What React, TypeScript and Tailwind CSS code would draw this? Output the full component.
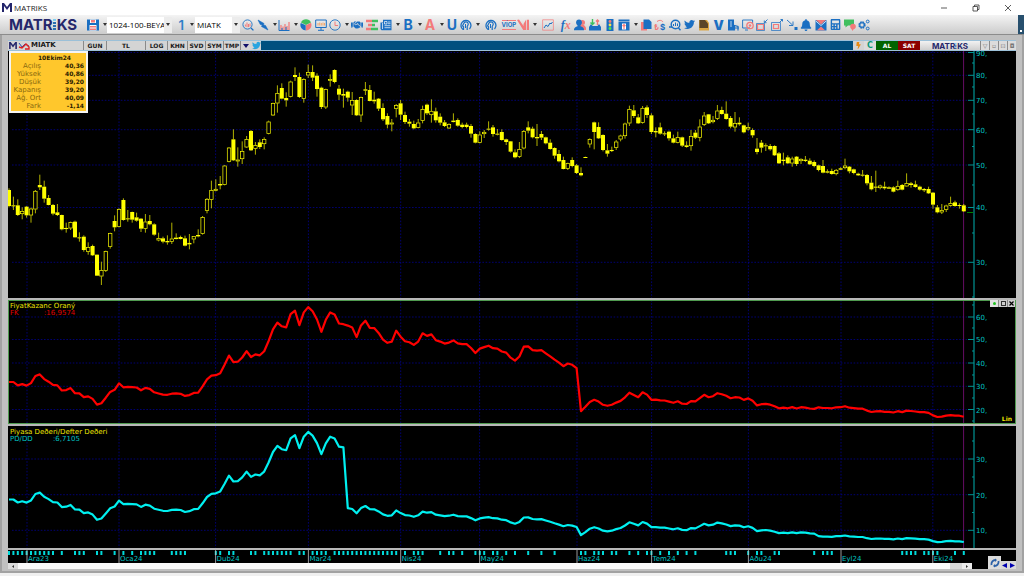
import { ReactNode } from "react";
import { FaBell, FaBolt, FaCalculator, FaHandshake, FaNewspaper, FaTwitter } from "react-icons/fa";

const BLUE = "#1b6fc2";
const RED = "#f37a7a";
const GREEN = "#3fbf5f";
const TEAL = "#009494";

const PLOT_X = 8;
const PLOT_W = 960;
const FIRST_X = 9;
const STEP = 4.4;

// one candle per item: high, body top, body bottom, low, filled (in thirds of a pixel)
const SEGMENTS: { base: number; rows: string }[] = [
  {
    base: 510,
    rows: `55,60,108,112,1 80,106,108,120,1 88,106,135,138,1 112,124,132,148,0 108,110,136,143,1 113,116,136,158,0 60,63,118,130,0
14,45,52,60,1 32,50,86,98,1 75,84,105,106,1 102,105,131,136,1 102,127,135,138,1 134,135,178,181,1 158,174,176,188,0
155,157,175,180,0 152,155,202,203,1 187,202,204,215,1 196,200,240,245,1 217,232,245,254,0 224,228,256,258,1 253,254,317,318,1
275,301,319,345,0 242,244,302,306,0 188,190,230,236,0 136,153,172,184,1 115,118,170,172,0 85,90,150,152,1 120,145,147,155,1
125,126,149,158,1 128,142,152,155,1 144,146,176,186,1 132,155,176,188,0 135,153,163,166,1 160,163,194,197,1 188,205,211,214,0
200,205,215,220,1 196,213,217,224,1 158,206,215,222,0 190,203,207,208,0 197,201,207,208,1 197,205,227,229,1 192,219,223,238,0
198,199,208,220,0 178,196,199,202,0 138,142,191,194,0 84,87,122,130,0 32,61,89,115,0 28,57,62,64,0 18,43,45,58,0`,
  },
  {
    base: 180,
    rows: `315,317,374,376,0 261,263,305,307,0 208,238,301,303,1 262,299,304,320,0 244,274,297,312,0 228,238,262,264,0 210,213,271,273,1
246,256,266,284,0 238,247,261,267,1 232,238,252,268,0 182,185,221,223,0 128,130,166,168,0 76,100,130,158,0 70,84,116,118,1
97,114,121,140,1 62,65,110,112,0 22,45,51,63,1 38,51,111,114,1 55,58,116,128,0 14,37,46,54,0 16,36,53,63,1 40,47,87,110,1
80,83,141,147,1 86,88,142,147,0 43,58,62,80,0 28,30,66,70,1 75,86,104,120,1 86,102,107,143,1 92,95,113,125,1 96,121,136,165,0
118,120,166,168,1 110,112,166,186,0 66,88,92,105,1 75,90,123,124,1 95,119,124,131,1 114,116,146,153,1 130,144,178,183,1
160,168,194,205,1 177,188,193,214,0 132,136,146,172,0 120,130,164,180,1 155,165,186,192,1 177,185,191,200,1 182,192,205,208,1
177,188,203,205,0 137,148,182,190,0 131,134,160,165,1 118,153,165,188,0 143,154,181,188,1 160,170,188,196,1 180,187,198,201,1
190,193,205,207,0`,
  },
  {
    base: 270,
    rows: `70,92,96,97,0 85,90,107,110,1 98,104,111,115,1 98,104,111,115,1 102,108,131,143,1 130,132,158,160,1 124,134,158,160,0
120,126,132,144,0 94,116,119,122,1 105,112,132,140,1 117,131,134,136,1 118,126,150,152,1 146,148,156,165,1 153,154,185,188,1
178,187,202,205,1 156,178,200,204,0 120,124,175,178,0 94,112,122,130,1 110,116,142,145,1 102,141,145,168,1 123,132,143,150,1
140,142,160,163,1 148,158,177,179,1 172,174,197,206,1 180,192,214,217,1 200,210,237,238,1 218,220,236,240,0 202,210,228,232,1
222,226,249,252,1 232,249,256,259,1 200,201,202,203,1 145,148,163,173,0 95,97,126,178,1 97,111,145,147,1 133,135,180,184,1
162,181,191,200,1 170,180,182,186,0 150,155,173,180,0 134,137,148,154,0 98,101,138,146,0 47,58,100,108,0 45,61,78,84,1
72,82,100,102,1 48,54,98,101,0 46,52,75,84,1 70,76,126,132,1 112,124,126,142,0 98,112,131,134,1 124,130,133,138,1
122,125,145,152,1 134,145,158,160,1 125,142,158,160,0 140,142,167,171,1 154,166,171,173,1 120,139,168,182,0 120,128,143,147,1
88,110,143,154,0 66,77,104,108,0 72,73,100,102,1 78,90,96,100,0 45,62,86,90,0 50,60,72,74,1 34,71,87,89,1 78,84,110,115,1
66,100,112,125,0 82,98,103,107,1 104,106,127,130,1 98,112,118,122,0 115,120,136,143,1 144,176,186,193,1 150,158,173,188,1
160,166,169,183,1 162,168,178,182,1 166,168,196,198,1 186,190,220,222,1 188,209,213,226,1 196,202,220,222,1 200,206,220,230,0
198,200,222,228,1 205,207,213,222,0 198,209,213,216,1 205,212,223,225,1 211,216,228,232,1 224,226,240,244,1 210,228,248,250,1
238,244,248,250,1 236,243,252,254,1 237,240,252,256,0 232,235,239,240,1 206,227,234,238,0 228,230,244,250,1 236,238,249,253,1
248,251,256,258,1 240,254,257,260,1 252,255,280,286,1 258,278,298,301,1 242,290,292,306,0 284,287,294,298,0 275,290,295,299,1
289,292,296,297,1 289,292,305,307,1 272,288,300,302,0 282,285,299,301,1 250,280,289,290,0 276,280,285,293,1 272,283,291,293,1
287,290,299,302,1 294,297,301,306,1 290,297,310,312,1 306,308,344,356,1 345,352,367,370,1 342,361,367,372,0 344,347,359,366,0
320,340,347,350,0 332,337,348,350,1 340,345,348,356,1 342,346,364,366,1`,
  },
];

type Candle = { x: number; high: number; top: number; bottom: number; low: number; filled: boolean };

const candles: Candle[] = SEGMENTS.flatMap(({ base, rows }) =>
  rows.split(/\s+/).map((r) => {
    const [h, t, b, l, f] = r.split(",").map(Number);
    return { x: 0, high: (h + base) / 3, top: (t + base) / 3, bottom: (b + base) / 3, low: (l + base) / 3, filled: f === 1 };
  })
).map((c, i) => ({ ...c, x: FIRST_X + i * STEP }));

// the price axis is logarithmic, 132.2px per doubling
const closes = candles.map((c) => 80 * Math.pow(2, (75.3 - (c.filled ? c.bottom : c.top)) / 132.2));

const peFactor = (i: number) => (i < 130 ? 0.79 : i < 184 ? 0.407 : 0.43);
const pbFactor = (i: number) => (i < 77 ? 0.463 : i < 130 ? 0.228 : i < 184 ? 0.183 : 0.172);

const pePoints = closes.map((c, i) => `${candles[i].x},${(409.5 - (c * peFactor(i) - 20) * 2.3175).toFixed(1)}`).join(" ");
const pbPoints = closes.map((c, i) => `${candles[i].x},${(494.7 - (c * pbFactor(i) - 20) * 3.565).toFixed(1)}`).join(" ");

const MONTHS: [number, string][] = [
  [27, "Ara23"], [119, "Oca24"], [215.6, "Dub24"], [308.4, "Mar24"], [400.7, "Nis24"], [479.6, "May24"],
  [577, "Haz24"], [651.6, "Tem24"], [748.4, "Aðu24"], [841, "Eyl24"], [932.8, "Eki24"],
];

const EVENTS = [
  0, 1, 2, 3, 4, 5, 6, 7, 8, 9, 10, 12, 15, 16, 17, 20, 21, 24, 26, 28, 30, 31, 32, 33, 37, 38, 39, 40, 47, 48, 50, 51, 55, 56,
  58, 59, 60, 61, 62, 63, 64, 66, 67, 69, 70, 71, 72, 74, 75, 76, 77, 78, 79, 80, 81, 82, 83, 84, 85, 86, 87, 88, 90, 92, 93, 94,
  98, 100, 101, 103, 106, 107, 108, 110, 111, 113, 115, 118, 121, 124, 130, 131, 133, 134, 135, 137, 138, 141, 143, 145, 146, 148,
  150, 152, 154, 156, 163, 164, 165, 168, 170, 171, 174, 175, 183, 185, 186, 187, 203, 204, 205, 206, 208, 209, 210, 211, 215, 217,
];

function Plot({ top, height, rows, children }: { top: number; height: number; rows: number[]; children: ReactNode }) {
  return (
    <svg className="block h-full min-w-0 flex-1" viewBox={`${PLOT_X} ${top} ${PLOT_W} ${height}`} preserveAspectRatio="none">
      <g stroke="#0000a0" strokeWidth="0.7" strokeDasharray="1.6 1.6">
        {rows.map((y) => <line key={y} x1="12" x2="968" y1={y} y2={y} />)}
        {MONTHS.map(([x]) => <line key={x} x1={x} x2={x} y1={top} y2={top + height} />)}
      </g>
      <line x1="963.6" x2="963.6" y1={top} y2={top + height} stroke="#80107f" strokeWidth="0.8" />
      {children}
    </svg>
  );
}

function Axis({ top, height, labels, minor }: { top: number; height: number; labels: [number, string][]; minor: number[] }) {
  const pct = (y: number) => `${(((y - top) / height) * 100).toFixed(2)}%`;
  return (
    <svg className="block h-full w-12 shrink-0" fontSize="7" fontFamily="'DejaVu Sans', sans-serif">
      <line x1="6" x2="6" y1="0" y2="100%" stroke={TEAL} strokeWidth="1.2" />
      {labels.map(([y, t]) => (
        <g key={t}>
          <line x1="0" x2="6" y1={pct(y)} y2={pct(y)} stroke={TEAL} />
          <text x="8" y={pct(y)} dy="3" fill="#00c4c4">{t}</text>
        </g>
      ))}
      {minor.map((y) => <line key={y} x1="4" x2="6" y1={pct(y)} y2={pct(y)} stroke={TEAL} />)}
    </svg>
  );
}

function Ico({ children }: { children: ReactNode }) {
  return <svg className="h-3 w-3 shrink-0" viewBox="0 0 12 12" fill="none">{children}</svg>;
}

function Caret() {
  return <svg className="h-[3px] w-1 shrink-0" viewBox="0 0 4 3"><path d="M0 0h4L2 3z" fill="#333" /></svg>;
}

const HeadIcon = (
  <Ico>
    <path d="M3 10.5A5 5 0 1 1 9.5 10" stroke={BLUE} strokeWidth="1.3" />
    <path d="M3.5 11V7.5L2.5 7l1.5-3c1-1.5 3-1.5 4 0 .8 1.5 0 2.5-.8 3.5V11" stroke={BLUE} strokeWidth="1.2" />
    <path d="M5.5 5v4" stroke={BLUE} />
  </Ico>
);

type Tool = { name: string; icon: ReactNode; menu?: boolean; gap?: boolean };

const TOOLS: Tool[] = [
  { name: "Detail search", icon: <Ico><circle cx="5.5" cy="5.5" r="4.6" stroke={BLUE} strokeWidth="0.9" /><path d="M9 9l2.4 2.4" stroke={BLUE} strokeWidth="1.3" /><path d="M3.4 7.5V5.5M5 8V3.5M6.5 8V5M8 7.5V4.5" stroke={RED} strokeWidth="1" /></Ico> },
  { name: "Signals", menu: true, icon: <Ico><path d="M1 1l6 3.5-.5 1.5 2 .5L11 11 4.5 7.5l.8-1.5-2-.5z" fill={BLUE} stroke={BLUE} strokeWidth="0.6" /></Ico> },
  { name: "Bars", menu: true, icon: <Ico><path d="M1 1v10.5h10.5" stroke={BLUE} /><path d="M3 11V6M5 11V7.5M7 11V5M9 11V7M11 11V3" stroke={RED} strokeWidth="1.2" /><path d="M4 11V9M8 11V8" stroke={BLUE} /></Ico> },
  { name: "Portfolio", icon: <Ico><path d="M6 6L1 3.5A5.5 5.5 0 0 1 11 3.5z" fill={GREEN} /><path d="M6 6.3l5-2.5a5.5 5.5 0 0 1-5 7.7z" fill={RED} /><path d="M5.7 6.3L.8 3.9a5.5 5.5 0 0 0 4.9 7.6z" fill={BLUE} /></Ico> },
  { name: "Screen", icon: <Ico><path d="M.7 1h10.6v7.5H.7zM6 8.5V11M3 11.3h6" stroke={BLUE} strokeWidth="1" /><path d="M3 6.5V4M4.7 6.5V3.5M6.3 6.5V4M8 6.5V3.5M9.5 6.5V4" stroke="#f5a25d" strokeWidth="0.9" /></Ico> },
  { name: "Time", menu: true, icon: <Ico><circle cx="6" cy="6" r="5.2" stroke={BLUE} strokeWidth="0.9" /><path d="M6 2.5V6.5h3" stroke={RED} /></Ico> },
  { name: "Agreement", icon: <FaHandshake size={12} color={BLUE} /> },
  { name: "Depth", icon: <Ico><path d="M0 2h6M2 6h4M0 10h5" stroke={RED} strokeWidth="2.4" /><path d="M6 2h6M6 6h3M5 10h7" stroke={GREEN} strokeWidth="2.4" /></Ico> },
  { name: "News", menu: true, icon: <Ico><path d="M3 .8h8.5v10.4H1.5L.5 10V3.5H3z" fill={BLUE} /><path d="M4.5 2.5h2.5v2.500H4.500zM8 3h2.5M8 4.700h2.500M4.500 6.700h6M4.500 8.700h6M2.500 4v6" stroke="#fff" strokeWidth="0.7" /></Ico> },
  { name: "Buy", menu: true, icon: <span className="text-[14px] leading-3 font-bold text-[#1b6fc2]">B</span> },
  { name: "Ask", menu: true, icon: <span className="text-[14px] leading-3 font-bold text-[#f37a7a]">A</span> },
  { name: "Underline", icon: <span className="text-[14px] leading-3 font-bold text-[#1b6fc2]">U</span> },
  { name: "Advisor", menu: true, gap: true, icon: HeadIcon },
  { name: "Analyst", gap: true, icon: HeadIcon },
  { name: "VIOP", icon: <span className="border-y border-[#f37a7a] text-[6px] leading-2 font-bold text-[#1b6fc2]">VİOP</span> },
  { name: "Matriks menu", menu: true, gap: true, icon: <Ico><path d="M0 1l2-.5L6.500 7v4.500zM6.500 5L9 .8V11H6.500zM9.8.8H12V11H9.800z" fill={RED} /></Ico> },
  { name: "Chart", gap: true, icon: <Ico><path d="M.6.8h10.8v10.4H.6z" stroke={RED} strokeWidth="0.7" /><path d="M2 9l2-3 2 1.5L8 4l1 1 1.5-2" stroke={BLUE} /></Ico> },
  { name: "Formula", icon: <span className="font-[Liberation_Serif,serif] text-[12px] leading-3 font-bold text-[#1b6fc2] italic">f<span className="text-[#f37a7a]">x</span></span> },
  { name: "Users", icon: <Ico><circle cx="8.5" cy="3.5" r="2.5" fill={RED} /><path d="M6 11V6h4l2 2.5V11z" fill={RED} /><circle cx="5" cy="3.5" r="2.9" fill={BLUE} /><path d="M0 11.3c0-3 2-4 5-4s5 1 5 4z" fill={BLUE} /><path d="M3.5 5h3v3h-3z" fill={BLUE} /></Ico> },
  { name: "Import", icon: <Ico><path d="M0 8l2-3 1.5 2h5L10 5l2 3v3.5H0z" fill={BLUE} /><path d="M3.5 0v5M1.5 3.5l2 2 2-2" stroke={GREEN} strokeWidth="1.4" /><path d="M8.5 6V1M7 2.5L8.5 1 10 2.5" stroke={RED} strokeWidth="1.4" /></Ico> },
  { name: "Alarm levels", icon: <Ico><path d="M2.5 0h7v12h-7z" fill={BLUE} /><circle cx="6" cy="2.5" r="1.4" fill={RED} /><circle cx="6" cy="6" r="1.4" fill="#f5e04a" /><circle cx="6" cy="9.5" r="1.4" fill="#4ee04e" /></Ico> },
  { name: "Upload", menu: true, icon: <Ico><path d="M.5 .5h11v2H.5zM.5 3h11v8.5H.5z" fill={BLUE} /><path d="M4 4.5h4v6H4z" fill="#fff" /><path d="M6 10V6M4.5 7L6 5.5 7.5 7" stroke={RED} strokeWidth="1.2" /></Ico> },
  { name: "Copy", icon: <Ico><path d="M1 3h6v8.5H1z" fill={RED} /><path d="M3.5 .5H9l2.5 2.5V10h-8z" fill={BLUE} /></Ico> },
  { name: "Currency", icon: <Ico><text x="0" y="11" fontSize="8" fontWeight="700" fill={RED} fontFamily="Inter, sans-serif">₺</text><text x="6" y="11" fontSize="8" fontWeight="700" fill={BLUE} fontFamily="Inter, sans-serif">$</text><path d="M3 2.5c3-2 5-1 6 .5" stroke={RED} /></Ico> },
  { name: "Find", icon: <Ico><circle cx="6.5" cy="5.5" r="4.3" stroke={BLUE} strokeWidth="1.4" /><path d="M9.5 9l2 2.3M0 8h3" stroke={BLUE} strokeWidth="1.4" /><path d="M4.5 7V5M6.5 7V3.5M8.5 7V4.5" stroke={BLUE} /></Ico> },
  { name: "Twitter", icon: <FaTwitter size={11} color={BLUE} /> },
  { name: "Notes", icon: <Ico><path d="M1 1h8l2 3v7.5H1z" fill="#d9a441" /><path d="M1.5 1H7l3 3.5V9H1.5z" fill="#5b4526" /></Ico> },
  { name: "V", icon: <span className="text-[13px] leading-3 font-black text-[#1b6fc2]">V</span> },
  { name: "Report", icon: <Ico><path d="M1 .5h6v11H1z" fill={BLUE} /><path d="M3 3h2M3 5h2M3 7h2" stroke="#fff" strokeWidth="0.7" /><path d="M7.5 11.5V6.5l3.5 1v4M6 9h6" stroke={BLUE} strokeWidth="1.2" /></Ico> },
  { name: "Screen off", icon: <Ico><path d="M8 9H.6V1h10v3M3 11h3" stroke={BLUE} strokeWidth="0.9" /><circle cx="8" cy="6.5" r="3.2" stroke={RED} strokeWidth="1.3" /><circle cx="8" cy="6.5" r="1.3" fill={RED} /></Ico> },
  { name: "Shrink", icon: <Ico><path d="M1.5 5.5h6v5h-6z" stroke={RED} strokeWidth="1.2" /><path d="M.5 4.5h8v7h-8z" stroke={BLUE} strokeWidth="0.7" /><path d="M11.5.5L8.5 3.5M8.3 1.5v2.2h2.2" stroke={BLUE} strokeWidth="0.9" /></Ico> },
  { name: "Grow", icon: <Ico><path d="M.5 3.5h9v8h-9z" stroke={BLUE} strokeWidth="0.7" /><path d="M2.5 5.5h5v4h-5z" stroke={RED} strokeWidth="1.2" /><path d="M8.5 3.5l3-3M9.5.5h2v2" stroke={BLUE} strokeWidth="0.9" /></Ico> },
  { name: "Snap", icon: <Ico><path d="M1 1l5.5 5M7 2.5v4H3" stroke={BLUE} strokeWidth="0.9" /><path d="M8.5 8h3v3h-3z" fill={BLUE} /></Ico> },
  { name: "Alerts", icon: <FaBell size={12} color={BLUE} /> },
  { name: "Mail", icon: <Ico><path d="M.5 1h11v10.5H.5z" fill={BLUE} /><path d="M1 1h10L6 5.5z" fill={RED} /><path d="M.8 2L6 6.5 11.2 2" stroke="#fff" strokeWidth="0.8" /><path d="M2 11.3L6 7.5l4 3.8z" fill={RED} /></Ico> },
  { name: "Calculator", icon: <FaCalculator size={11} color={BLUE} /> },
  { name: "Chat", icon: <Ico><path d="M0 .5h10v6H4L1.5 8.5v-2H0z" fill={GREEN} /><circle cx="9" cy="7.5" r="2.8" fill={RED} /><path d="M7 9l3 .5L8.5 12z" fill={RED} /></Ico> },
  { name: "Settings", icon: <Ico><circle cx="4" cy="6" r="2.8" stroke={BLUE} strokeWidth="1.7" strokeDasharray="1.6 .6" /><circle cx="4" cy="6" r="2.2" stroke={BLUE} /><circle cx="9.7" cy="2.5" r="1.4" stroke={BLUE} /><circle cx="9.7" cy="9.5" r="1.4" stroke={BLUE} /></Ico> },
];

function Brand({ small }: { small?: boolean }) {
  return (
    <span className={`flex items-center font-[Inter,sans-serif] font-bold text-[#25276b] ${small ? "text-[8px] leading-2" : "text-[15px] leading-3"}`}>
      MATR
      <svg className={small ? "h-[6px] w-[2px]" : "h-[11px] w-[4px]"} viewBox="0 0 4 11" preserveAspectRatio="none">
        <path d="M0 0h3v2H0z" fill="#7fd0f2" />
        <path d="M0 3h3v2H0zM0 6h3v2H0zM0 9h3v2H0z" fill="#2b6fb0" />
      </svg>
      KS
    </span>
  );
}

function MMark({ className }: { className: string }) {
  return <svg className={className} viewBox="0 0 10 9"><path d="M0 0h2l3 4 3-4h2v9H8V3L5 7 2 3v6H0z" fill="#23256b" /></svg>;
}

function Combo({ label, value, width }: { label: string; value: string; width: string }) {
  return (
    <span className={`relative flex h-4 items-center overflow-hidden bg-white ${width}`}>
      <select aria-label={label} className="block h-3 w-full appearance-none overflow-hidden pl-[2px] font-[Open_Sans,sans-serif] text-[8px] leading-3 text-clip text-black">
        <option>{value}</option>
      </select>
      <span className="pointer-events-none absolute inset-y-0 right-0 flex w-2 items-center justify-center bg-[#ececec]"><Caret /></span>
    </span>
  );
}

const TABS: [string, string][] = [
  ["GUN", "w-[23px]"], ["TL", "w-[39px]"], ["LOG", "w-[22px]"], ["KHN", "w-[20px]"], ["SVD", "w-[18px]"], ["SYM", "w-[18px]"], ["TMP", "w-[17px]"],
];

const QUOTE: [string, string][] = [
  ["Açılış", "40,36"], ["Yüksek", "40,86"], ["Düşük", "39,20"], ["Kapanış", "39,20"], ["Ağ. Ort", "40,09"], ["Fark", "-1,14"],
];

function PanelTitle({ title, code, value, gap }: { title: string; code: string; value: string; gap: string }) {
  return (
    <div className={`absolute top-[3px] left-[2px] text-[7px] leading-[7px] ${code === "FK" ? "text-[#e00000]" : "text-[#00c4c4]"}`}>
      <div className="text-[#ece400]">{title}</div>
      <div className="flex"><span className={gap}>{code}</span><span>:{value}</span></div>
    </div>
  );
}

export default function App() {
  return (
    <div className="flex h-screen min-h-[400px] flex-col overflow-hidden bg-[#e6e6e6] font-[DejaVu_Sans,sans-serif]">
      <header className="flex h-[15px] shrink-0 items-center bg-white">
        <MMark className="ml-[2px] h-[9px] w-[10px]" />
        <h1 className="ml-[2px] flex-1 font-[Open_Sans,sans-serif] text-[8px] leading-3 text-[#222]">MATRIKS</h1>
        <div className="flex">
          <button aria-label="Minimize" className="flex w-8 justify-center"><svg className="h-2 w-2" viewBox="0 0 8 8"><path d="M1 4h6" stroke="#333" strokeWidth="0.8" /></svg></button>
          <button aria-label="Restore" className="flex w-8 justify-center"><svg className="h-2 w-2" viewBox="0 0 8 8" fill="none" stroke="#333" strokeWidth="0.8"><path d="M1 2.5h4.5V7H1zM2.5 2.5V1H7v4.5H5.5" /></svg></button>
          <button aria-label="Close" className="flex w-8 justify-center"><svg className="h-2 w-2" viewBox="0 0 8 8"><path d="M1 1l6 6M7 1L1 7" stroke="#333" strokeWidth="0.8" /></svg></button>
        </div>
      </header>

      <nav className="flex h-5 shrink-0 items-center border-b border-[#8c8c8c] bg-linear-to-b from-[#f4f4f4] to-[#cccccc] pl-[9px] font-[Inter,sans-serif]">
        <span className="w-[76px]"><Brand /></span>
        <button aria-label="Save" className="flex w-[22px] items-center gap-1 pl-[2px]">
          <Ico><path d="M0 .5h12v11H0z" fill={BLUE} /><path d="M3 .5h6V4H3z" fill="#fff" /><path d="M4 1h4v2.5H4z" fill={RED} /><path d="M2.5 6h7v5.5h-7z" fill="#fff" /><path d="M3 7h6v1.5H3zM3 9.5h6V11H3z" fill={RED} /></Ico>
          <Caret />
        </button>
        <Combo label="Page" value="1024-100-BEYA" width="w-[65px]" />
        <button className="flex w-[23px] items-center justify-end gap-[6px] pr-px text-[13px] leading-3 font-semibold text-[#2f80c8]">1<Caret /></button>
        <Combo label="Symbol" value="MIATK" width="w-[45px]" />
        <div className="ml-px flex w-[631px] shrink-0 items-center">
          {TOOLS.map((t) => (
            <button key={t.name} aria-label={t.name} className={`flex h-4 min-w-0 basis-0 items-center gap-[3px] ${t.menu ? "grow-3" : "grow-2"} ${t.gap ? "mr-[3px]" : ""}`}>
              <span className="flex w-[14px] shrink-0 items-center justify-center">{t.icon}</span>
              {t.menu && <Caret />}
            </button>
          ))}
        </div>
        <span className="ml-auto flex h-full w-[6px] items-end justify-center bg-[#28506e] pb-[2px]"><span className="h-[2px] w-[2px] bg-white" /></span>
      </nav>

      <main className="flex min-h-0 flex-1 flex-col border-x-2 border-b-2 border-[#a2a2a2] bg-[#c0c0c0] px-[6px] pt-[5px]">
        <div className="flex h-[11px] shrink-0 items-stretch border-y border-[#9cc0d8] bg-[#00507f] text-[6px] leading-[9px] font-bold text-[#1a1a1a]">
          <span className="flex w-[22px] items-center gap-px bg-[#d4d4d4] pl-px">
            <MMark className="h-[7px] w-[8px]" />
            <svg className="h-2 w-3" viewBox="0 0 12 8" fill="none"><path d="M1 1l3 4 3-3 4 2" stroke="#2a50b0" /><path d="M1 5l3 1 4-4 3 3v2H7" stroke="#e02020" strokeWidth="1.4" /></svg>
          </span>
          <span className="w-[54px] border-r border-[#8a8a8a] bg-[#d4d4d4] pl-px text-[7px]">MIATK</span>
          {TABS.map(([t, w]) => <button key={t} className={`border-r border-[#8a8a8a] bg-[#d4d4d4] ${w}`}>{t}</button>)}
          <button aria-label="More" className="flex w-[10px] items-center justify-center bg-[#d4d4d4]"><svg className="h-1 w-[6px]" viewBox="0 0 6 4"><path d="M0 0h6L3 4z" fill="#10106a" /></svg></button>
          <button aria-label="Share" className="flex w-[10px] items-center justify-center bg-[#d4d4d4]"><FaTwitter size={9} color="#29a4e0" /></button>
          <span className="flex-1" />
          <button aria-label="Quick order" className="flex w-[11px] items-center justify-center bg-[#d4d4d4]"><FaBolt size={7} color="#e88a10" /></button>
          <button aria-label="Refresh" className="w-[12px] bg-[#dcdcdc] text-[8px] text-[#089a78]">C</button>
          <button className="w-[22px] bg-[#006400] text-white">AL</button>
          <button className="w-[22px] bg-[#8b0000] text-white">SAT</button>
          <span className="flex w-[60px] items-center justify-center bg-linear-to-b from-[#f2f2f2] to-[#cfcfcf]"><Brand small /></span>
          {["▽", "▫", "⊡", "◘"].map((g) => <button key={g} className="w-[9px] border-l border-[#8a8a8a] bg-[#dcdcdc] font-normal text-[#777]">{g}</button>)}
        </div>

        <section className="relative flex min-h-0 flex-[247] basis-0 bg-black">
          <Plot top={51} height={247} rows={[52.5, 75.3, 100.3, 129.7, 165, 207.5, 262.3]}>
            <g stroke="#ffff00">
              {candles.map((c) => (
                <g key={c.x}>
                  <path d={`M${c.x} ${c.high}V${c.top}M${c.x} ${c.bottom}V${c.low}`} strokeWidth="0.7" />
                  {c.filled ? (
                    <rect x={c.x - 2} y={c.top} width="4" height={Math.max(1, c.bottom - c.top)} fill="#ffff00" stroke="none" />
                  ) : (
                    <rect x={c.x - 1.7} y={c.top + 0.3} width="3.4" height={Math.max(0.4, c.bottom - c.top - 0.6)} fill="#000" strokeWidth="0.7" />
                  )}
                </g>
              ))}
            </g>
          </Plot>
          <Axis
            top={51}
            height={247}
            labels={[[52.5, "90,"], [75.3, "80,"], [100.3, "70,"], [129.7, "60,"], [165, "50,"], [207.5, "40,"], [262.3, "30,"]]}
            minor={[63, 87, 114, 146.5, 185, 233, 297]}
          />
          <svg className="absolute top-[65%] right-[43px] h-px w-[6px]"><path d="M0 .5h6" stroke="#008000" /></svg>
          <div className="absolute top-0 left-px w-[79px] border-2 border-[#f4f4f4] bg-[#ffc72c] pt-px pb-px">
            <table className="w-full text-[7px] leading-2 text-[#8a6a10]">
              <caption className="pl-3 text-center text-[6px] leading-2 font-bold text-[#2a2000]">10Ekim24</caption>
              <tbody>
                {QUOTE.map(([k, v]) => (
                  <tr key={k}>
                    <th className="w-[30px] p-0 text-right font-normal">{k}</th>
                    <td className="p-0 pr-[2px] text-right text-[6px] font-bold text-[#2a2000]">{v}</td>
                  </tr>
                ))}
              </tbody>
            </table>
          </div>
        </section>

        <div className="h-[2px] shrink-0 bg-[#b8b8b8]" />
        <section className="relative flex min-h-0 flex-[124] basis-0 bg-black outline outline-1 -outline-offset-1 outline-[#4f9a4f]">
          <Plot top={300} height={124} rows={[317, 339.5, 363, 386.3, 409.5]}>
            <polyline points={pePoints} fill="none" stroke="#ff0000" strokeWidth="2.2" strokeLinejoin="round" />
          </Plot>
          <Axis
            top={300}
            height={124}
            labels={[[317, "60,"], [339.5, "50,"], [363, "40,"], [386.3, "30,"], [409.5, "20,"]]}
            minor={[305, 328, 351, 375, 398, 421]}
          />
          <PanelTitle title="FiyatKazanc Oraný" code="FK" value="16,9574" gap="w-[34px]" />
          <div className="absolute top-0 right-px flex text-[6px] leading-[7px]">
            <button aria-label="Add" className="flex h-[7px] w-2 items-center justify-center bg-[#e0e0e0]"><span className="h-[3px] w-[3px] rounded-full bg-[#20c020]" /></button>
            <button aria-label="Maximize" className="flex h-[7px] w-[9px] items-center justify-center border-l border-[#888] bg-[#cfcfcf]"><span className="h-[5px] w-[5px] border border-[#333]" /></button>
            <button aria-label="Remove" className="flex h-[7px] w-2 items-center justify-center border-l border-[#888] bg-[#cfcfcf]"><svg className="h-[5px] w-[5px]" viewBox="0 0 5 5"><path d="M.5.5l4 4M4.5.5l-4 4" stroke="#000" strokeWidth="1.2" /></svg></button>
          </div>
          <span className="absolute right-1 bottom-[2px] text-[6px] leading-[7px] font-bold text-[#ece400]">Lin</span>
        </section>

        <div className="h-[2px] shrink-0 bg-[#b8b8b8]" />
        <section className="relative flex min-h-0 flex-[122] basis-0 bg-black">
          <Plot top={426} height={122} rows={[459, 494.7, 530.3]}>
            <polyline points={pbPoints} fill="none" stroke="#00f0f0" strokeWidth="2.2" strokeLinejoin="round" />
          </Plot>
          <Axis top={426} height={122} labels={[[459, "30,"], [494.7, "20,"], [530.3, "10,"]]} minor={[441, 477, 512.5]} />
          <PanelTitle title="Piyasa Deðeri/Defter Deðeri" code="PD/DD" value="6,7105" gap="w-[43px]" />
        </section>

        <div className="h-[2px] shrink-0 bg-[#b8b8b8]" />
        <footer className="flex h-[19px] shrink-0 bg-black">
          <div className="flex min-w-0 flex-1 flex-col">
            <svg className="block h-[13px] w-full" fontSize="7" fontFamily="'DejaVu Sans', sans-serif" fill="#00c4c4">
              {EVENTS.map((i) => <rect key={i} x={`${(((i * STEP) / PLOT_W) * 100).toFixed(3)}%`} y="1" width="2" height="4" fill="#00dada" />)}
              {MONTHS.map(([x, t]) => {
                const px = `${(((x - PLOT_X) / PLOT_W) * 100).toFixed(3)}%`;
                return (
                  <g key={t}>
                    <line x1={px} x2={px} y1="0" y2="13" stroke="#c0c0c0" strokeWidth="0.8" />
                    <text x={px} y="11" dx="1">{t}</text>
                  </g>
                );
              })}
            </svg>
            <div className="z-10 -mr-1 flex h-[6px] items-stretch bg-[#fafafa]">
              <button aria-label="Scroll left" className="flex w-[10px] items-center justify-center bg-[#dcdcdc]"><svg className="h-[3px] w-[2px]" viewBox="0 0 2 3"><path d="M2 0v3L0 1.5z" fill="#333" /></svg></button>
              <span className="flex-1" />
              <span className="w-3 bg-[#d8d8d8]" />
              <button aria-label="Scroll right" className="flex w-[10px] items-center justify-center bg-[#ececec]"><svg className="h-[3px] w-[2px]" viewBox="0 0 2 3"><path d="M0 0v3l2-1.5z" fill="#333" /></svg></button>
            </div>
          </div>
          <div className="flex w-12 shrink-0 items-end justify-end">
            <button aria-label="Reload" className="flex h-[13px] w-[13px] items-center justify-center bg-[#dcdcdc]">
              <svg className="h-[10px] w-[10px]" viewBox="0 0 10 10" fill="none" stroke="#2a60a8" strokeWidth="1.8"><path d="M1.5 7C1 4 3 2 5.5 2M8.5 3C9 6 7 8 4.5 8" /><path d="M5 .5L7 2 5 4zM5 6L3 8l2 1.5z" fill="#2a60a8" stroke="none" /></svg>
            </button>
            <span className="flex h-2 w-[15px] items-center justify-around bg-[#d8d8d8]">
              <button aria-label="Previous"><svg className="h-[5px] w-[5px]" viewBox="0 0 5 5"><path d="M5 0v5L0 2.5z" fill="#0000b0" /></svg></button>
              <button aria-label="Next"><svg className="h-[5px] w-[5px]" viewBox="0 0 5 5"><path d="M0 0v5l5-2.5z" fill="#0000b0" /></svg></button>
            </span>
          </div>
        </footer>
        <div className="h-[2px] shrink-0" />
      </main>
      <div className="h-[3px] shrink-0 bg-[#f0f0f0]" />
    </div>
  );
}
